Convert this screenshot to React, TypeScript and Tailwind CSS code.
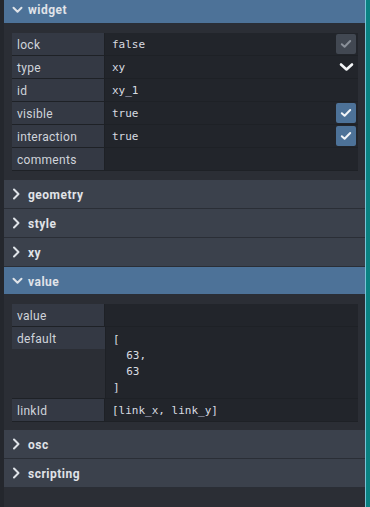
import React from "react";

const labelFont = { fontFamily: "Roboto, 'Noto Sans', sans-serif" };
const monoFont = { fontFamily: "'DejaVu Sans Mono', 'Liberation Mono', monospace" };

function ChevronRight() {
  return (
    <svg width="8" height="12" viewBox="0 0 8 12" className="shrink-0">
      <path d="M2 1.5 L6.5 6 L2 10.5" fill="none" stroke="#dfe3e8" strokeWidth="2" strokeLinecap="round" strokeLinejoin="round" />
    </svg>
  );
}

function ChevronDown() {
  return (
    <svg width="11" height="8" viewBox="0 0 11 8" className="shrink-0">
      <path d="M1.5 1.8 L5.5 5.8 L9.5 1.8" fill="none" stroke="#dfe3e8" strokeWidth="2" strokeLinecap="round" strokeLinejoin="round" />
    </svg>
  );
}

function SelectChevron() {
  return (
    <svg width="15" height="10" viewBox="0 0 15 10" className="shrink-0">
      <path d="M2 2.5 L7.5 7.5 L13 2.5" fill="none" stroke="#f4f6f8" strokeWidth="2.6" strokeLinecap="round" strokeLinejoin="round" />
    </svg>
  );
}

function Check({ active }: { active: boolean }) {
  return (
    <div
      className={
        "w-[20px] h-[20px] rounded-[2px] flex items-center justify-center mr-[2px] " +
        (active ? "bg-[#4d7298]" : "bg-[#424852]")
      }
    >
      <svg width="12" height="10" viewBox="0 0 12 10">
        <path
          d="M1.8 5.2 L4.6 7.8 L10.2 2"
          fill="none"
          stroke={active ? "#f1f4f8" : "#8a9099"}
          strokeWidth="2"
          strokeLinecap="round"
          strokeLinejoin="round"
        />
      </svg>
    </div>
  );
}

function Row({
  label,
  value,
  right,
}: {
  label: string;
  value?: React.ReactNode;
  right?: React.ReactNode;
}) {
  return (
    <div className="flex items-start border-b border-[#1e2126]">
      <div
        className="w-[93px] h-[22px] shrink-0 bg-[#343944] border-r border-[#1e2126] pl-[5px] pt-[1px] flex items-center text-[12px] tracking-[0.3px] text-[#d0d4db]"
        style={labelFont}
      >
        {label}
      </div>
      <div
        className="flex-1 h-[22px] bg-[#22252b] pl-[7px] flex items-center justify-between text-[11px] text-[#d9dce1]"
        style={monoFont}
      >
        <span className="pt-[2px]">{value}</span>
        {right}
      </div>
    </div>
  );
}

function Header({
  title,
  open,
  h = "h-[29px]",
  textPad = "pt-[2px]",
}: {
  title: string;
  open?: boolean;
  h?: string;
  textPad?: string;
}) {
  return (
    <div
      className={
        h +
        " flex items-center border-b border-[#2a2e36] " +
        (open ? "bg-[#4d7298] pl-[8px] gap-[5px]" : "bg-[#3b414c] pl-[8px] gap-[8px]")
      }
    >
      {open ? <ChevronDown /> : <ChevronRight />}
      <span
        className={"text-[12px] font-bold tracking-[0.5px] text-[#e0e3e8] " + textPad}
        style={labelFont}
      >
        {title}
      </span>
    </div>
  );
}

export default function App() {
  return (
    <div className="w-[370px] h-[507px] flex bg-[#2b2e35] overflow-hidden">
      <div className="w-[4px] bg-[#24272d] shrink-0" />
      <div className="flex-1 flex flex-col">
        <Header title="widget" open h="h-[24px] pb-[3px]" textPad="pt-0" />
        <div className="pt-[9px] pb-[9px] pl-[8px] pr-[7px] bg-[#2b2e35]">
          <Row label="lock" value="false" right={<Check active={false} />} />
          <Row
            label="type"
            value="xy"
            right={
              <div className="mr-[4px]">
                <SelectChevron />
              </div>
            }
          />
          <Row label="id" value="xy_1" />
          <Row label="visible" value="true" right={<Check active />} />
          <Row label="interaction" value="true" right={<Check active />} />
          <Row label="comments" value="" />
        </div>
        <Header title="geometry" />
        <Header title="style" />
        <Header title="xy" />
        <Header title="value" open h="h-[28px]" />
        <div className="pt-[9px] pb-[8px] pl-[8px] pr-[7px] bg-[#2b2e35]">
          <Row label="value" value="" />
          <div className="flex items-start border-b border-[#1e2126]">
            <div
              className="w-[93px] h-[22px] shrink-0 bg-[#343944] pl-[5px] pt-[1px] flex items-center text-[12px] tracking-[0.3px] text-[#d0d4db]"
              style={labelFont}
            >
              default
            </div>
            <div
              className="flex-1 bg-[#22252b] border-l border-[#1e2126] pl-[7px] pt-[5px] pb-[2px] text-[11px] leading-[16px] text-[#d9dce1] whitespace-pre"
              style={monoFont}
            >
              {"[\n  63,\n  63\n]"}
            </div>
          </div>
          <Row label="linkId" value="[link_x, link_y]" />
        </div>
        <Header title="osc" />
        <Header title="scripting" />
        <div className="flex-1 bg-[#2b2e35]" />
      </div>
      <div className="w-[1px] bg-[#7cc3d6] shrink-0" />
      <div className="w-[4px] bg-[#0a8282] shrink-0" />
    </div>
  );
}
